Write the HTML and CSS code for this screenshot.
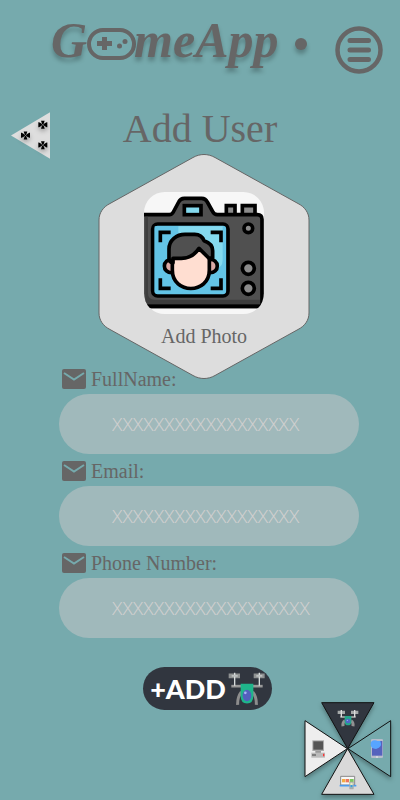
FILE: index.html
```html
<!DOCTYPE html>
<html lang="en">
<head>
<meta charset="utf-8">
<meta name="viewport" content="width=device-width, initial-scale=1">
<title>GameApp - Add User</title>
<link rel="stylesheet" href="styles.css">
</head>
<body>
<svg class="defs" aria-hidden="true">
  <symbol id="mail" viewBox="0 0 24 20">
    <path fill="#666" d="M2 0H22Q24 0 24 2V18Q24 20 22 20H2Q0 20 0 18V2Q0 0 2 0Z"/>
    <path fill="none" stroke="#76aaad" stroke-width="2" d="M2 4L12 10.500L22 4"/>
  </symbol>
  <symbol id="cross" viewBox="0 0 27 24" overflow="visible">
    <path d="M8 0H19L16 9L25 4H27V19H25L16 14L19 24H8L11 14L2 19H0V4H2L11 9Z"/>
    <path stroke="#aaa" stroke-width="1.500" d="M8 7L19 17M19 7L8 17"/>
  </symbol>
</svg>

<header class="header">
  <a class="logo" href="#" aria-label="GameApp">
    <span>G</span>
    <svg class="pad" viewBox="0 0 49 32" aria-hidden="true">
      <rect x="2" y="2" width="45" height="28" rx="14" fill="none" stroke="#666" stroke-width="4"/>
      <path d="M10 15.500H25M17.500 9V22" stroke="#666" stroke-width="5"/>
      <circle cx="32.500" cy="18" r="2.500" fill="#666"/>
      <circle cx="38" cy="13.500" r="2.500" fill="#666"/>
    </svg>
    <span class="word">meApp</span>
    <i class="dot"></i>
  </a>
  <button class="menu" type="button" aria-label="Menu">
    <svg viewBox="0 0 48 48">
      <circle cx="24" cy="24" r="21.500" fill="none" stroke="#666" stroke-width="4.500"/>
      <path d="M15 14.500H33.500M15 24H33.500M15 33.500H33.500" stroke="#666" stroke-width="5" stroke-linecap="round"/>
    </svg>
  </button>
</header>

<main>
  <div class="title-row">
    <a class="back" href="#" aria-label="Back">
      <svg viewBox="0 0 117 140">
        <path d="M0 70L117 0V140Z" fill="#dedede"/>
        <g class="soft">
          <use href="#cross" x="82" y="26" width="27" height="24"/>
          <use href="#cross" x="30" y="58" width="27" height="24"/>
          <use href="#cross" x="82" y="87" width="27" height="24"/>
        </g>
      </svg>
    </a>
    <h1>Add User</h1>
  </div>

  <button class="photo" type="button">
    <svg class="hex" viewBox="98 153 212 227" aria-hidden="true">
      <path d="M99 220C99 213 103 207 110 203.500L193 157.500C200 153.500 208 153.500 215 157.500L298 203.500C305 207 309 213 309 220V313C309 320 305 326 298 329.500L215 375.500C208 379.500 200 379.500 193 375.500L110 329.500C103 326 99 320 99 313Z" fill="#ddd" stroke="#666"/>
    </svg>
    <svg class="camera" viewBox="42 36 360 366" aria-hidden="true">
      <clipPath id="round"><rect x="42" y="36" width="360" height="366" rx="62"/></clipPath>
      <g clip-path="url(#round)" stroke="#000" stroke-width="11" stroke-linejoin="round">
        <rect x="42" y="36" width="360" height="366" fill="#f7f7f7" stroke="none"/>
        <path d="M289 103V77H315V103M337 103V77H375V103" fill="#8b8b8b" stroke-linejoin="miter"/>
        <path d="M30 104H118Q126 104 130 96L146 66Q151 55 163 55H215Q227 55 232 66L247 93Q252 104 262 104H382Q396 104 396 118V379H30Z" fill="#505050"/>
        <path d="M46 110H54V340Q54 359 74 359H390V373H46Z" fill="#3d3d3d" stroke="none"/>
        <path d="M42 379H402" />
        <rect x="163" y="77" width="50" height="27" fill="#84d9ee" stroke-linejoin="miter"/>
        <rect x="68" y="132" width="226" height="216" rx="15" fill="#63c4e6"/>
        <path d="M145 139H278V240Q278 266 252 266H145Z" fill="#84daef" stroke="none"/>
        <path d="M74 139H145Q105 190 122 240T160 342H82Q74 342 74 334Z" fill="#63c4e6" stroke="none"/>
        <path d="M91 187V157H122M242 157H273V187M273 295V325H242M122 325H91V295" fill="none" stroke-linejoin="miter"/>
        <path d="M129 239C95 233 94 282 129 278Z" fill="#dca9a4"/>
        <path d="M236 239C270 233 271 282 236 278Z" fill="#dca9a4"/>
        <path d="M127 225V270C127 344 238 344 238 270V225L207 205L170 222Z" fill="#ffded1"/>
        <path d="M117 234V207C117 180 140 163 165 163H194Q215 163 222 182C240 188 248 198 248 212V234H236L207 205Q188 235 154 235H129V248Q117 247 117 234Z" fill="#505050"/>
        <circle cx="355" cy="145" r="13" fill="#8b8b8b"/>
        <circle cx="355" cy="265" r="18" fill="#8b8b8b"/>
        <circle cx="355" cy="325" r="18" fill="#8b8b8b"/>
      </g>
    </svg>
    <span class="caption">Add Photo</span>
  </button>

  <form class="form">
    <label for="fullname"><svg viewBox="0 0 24 20" aria-hidden="true"><use href="#mail"/></svg>FullName:</label>
    <input id="fullname" type="text" placeholder="XXXXXXXXXXXXXXXXXX">
    <label for="email"><svg viewBox="0 0 24 20" aria-hidden="true"><use href="#mail"/></svg>Email:</label>
    <input id="email" type="email" placeholder="XXXXXXXXXXXXXXXXXX">
    <label for="phone"><svg viewBox="0 0 24 20" aria-hidden="true"><use href="#mail"/></svg>Phone Number:</label>
    <input id="phone" type="tel" placeholder="XXXXXXXXXXXXXXXXXXX">
    <button class="add" type="submit">
      <span>+ADD</span>
      <svg viewBox="292 46 114 104" aria-hidden="true">
        <path d="M302 91H396" stroke="#999" stroke-width="8"/>
        <path d="M332 108Q320 124 321 147M366 108Q378 124 377 147" fill="none" stroke="#8d8d8d" stroke-width="9"/>
        <path d="M294 53H328V67H294ZM369 53H402V67H369Z" fill="#8f9292"/>
        <path d="M312 51V90M386 51V90" stroke="#d8dddd" stroke-width="4"/>
        <path d="M303 60H321M377 60H395" stroke="#bcc0c0" stroke-width="5"/>
        <path d="M330 84H368V120Q368 143 349 143T330 120Z" fill="#1fb58b"/>
        <ellipse cx="349" cy="119" rx="13" ry="17" fill="#5360bd"/>
        <ellipse cx="344" cy="111" rx="4" ry="4" fill="#a9b5f5"/>
      </svg>
    </button>
  </form>
</main>

<nav class="wheel" aria-label="Devices">
  <svg viewBox="0 0 315 315">
    <g class="soft">
      <a href="#" aria-label="Drones"><path class="tri" fill="#31363f" d="M80 23H237L158 161Z"/></a>
      <a href="#" aria-label="Computers"><path class="tri" fill="#eee" d="M30 77V245L157 161Z"/></a>
      <a href="#" aria-label="Laptops"><path class="tri" fill="#d9d9d9" d="M158 161L80 298H237Z"/></a>
      <a href="#" aria-label="Phones"><path class="tri" fill="#76aaad" d="M287 77V245L159 161Z"/></a>
    </g>
    <g class="art">
      <path d="M136 66H182" stroke="#aaa" stroke-width="5"/>
      <path d="M150 77Q142 82 144 94M168 77Q176 82 174 94" fill="none" stroke="#929292" stroke-width="9"/>
      <path d="M128 47H150V57H128ZM168 47H190V57H168Z" fill="#a5a9a9"/>
      <path d="M139 45V66M179 45V66" stroke="#ddd" stroke-width="4"/>
      <path d="M149 63H169V80Q169 91 159 91T149 80Z" fill="#25a58b"/>
      <circle cx="159" cy="78" r="7" fill="#5265c9"/>
      <circle cx="157" cy="76" r="2" fill="#9fb4ff"/>

      <path d="M52 136H87V168H52Z" fill="#aaa"/>
      <path d="M55 139H84V164H55Z" fill="#555"/>
      <path d="M61 168H78V174H61Z" fill="#999"/>
      <path d="M49 173H90V188H49Z" fill="#bbb"/>
      <path d="M51 180H63" stroke="#444" stroke-width="3"/>
      <path d="M86 176V184" stroke="#f33" stroke-width="4"/>

      <rect x="228" y="132" width="36" height="57" rx="4" fill="#b7bccb"/>
      <path d="M231 138H262V182H231Z" fill="#5562bd"/>
      <path d="M231 138H256Q264 157 243 162L231 159Z" fill="#58a5ff"/>
      <circle cx="239" cy="148" r="12" fill="#58a5ff"/>
      <circle cx="246" cy="186" r="2" fill="#fff"/>

      <path d="M137 244H179V270H137Z" fill="#f7f7f7" stroke="#888" stroke-width="3"/>
      <path d="M134 272H184" stroke="#4b9cf0" stroke-width="5"/>
      <path d="M141 252H151V262H141Z" fill="#f5ad43"/>
      <path d="M152 252H162V262H152Z" fill="#ee755e"/>
      <path d="M164 252H176V262H164Z" fill="#7bc65c"/>
      <rect x="163" y="260" width="13" height="23" rx="2" fill="#aaa"/>
      <path d="M166 263H173V277H166Z" fill="#e7edc2"/>
      <path d="M166 270H173V277H166Z" fill="#3e9bd8"/>
    </g>
  </svg>
</nav>
</body>
</html>
```
FILE: styles.css
```css
* { box-sizing: border-box; }

body {
  margin: 0;
  min-height: 100vh;
  background: #76aaad;
  color: #666;
  font-family: "Liberation Serif", serif;
  font-size: 20px;
}

button {
  border: 0;
  padding: 0;
  background: none;
  color: inherit;
  font: inherit;
  cursor: pointer;
}

svg { display: block; }

.defs {
  position: absolute;
  width: 0;
  height: 0;
}

.header {
  display: flex;
  justify-content: space-between;
  align-items: flex-start;
  padding: 12px 17px 24px 51px;
}

.logo {
  display: flex;
  align-items: center;
  color: #666;
  font-size: 50px;
  font-style: italic;
  font-weight: bold;
  line-height: 56px;
  text-decoration: none;
  text-shadow: 0 4px 4px rgba(0, 0, 0, .25);
}

.pad {
  width: 49px;
  height: 32px;
  margin-top: 8px;
}

.word { margin-left: -2px; }

.dot {
  width: 12px;
  height: 12px;
  margin: 8px 0 0 16px;
  border-radius: 50%;
  background: #666;
  box-shadow: 0 4px 4px rgba(0, 0, 0, .25);
}

.menu {
  flex: none;
  margin-top: 14px;
}

.menu svg {
  width: 48px;
  height: 48px;
}

.title-row {
  display: grid;
  grid-template-columns: 50px 1fr 50px;
  align-items: center;
}

.back {
  justify-self: end;
  padding-top: 14px;
}

.back svg {
  width: 39px;
  height: 47px;
}

.soft { filter: drop-shadow(0 8px 6px rgba(0, 0, 0, .3)); }

h1 {
  margin: 0;
  font-size: 40px;
  font-weight: normal;
  line-height: 48px;
  text-align: center;
}

.photo {
  position: relative;
  display: flex;
  flex-direction: column;
  align-items: center;
  gap: 10px;
  width: 212px;
  margin: -6px auto -18px;
  left: 4px;
  padding: 39px 0 32px;
}

.hex {
  position: absolute;
  inset: 0;
  width: 100%;
  height: 100%;
}

.camera {
  position: relative;
  width: 120px;
  height: 122px;
}

.caption {
  position: relative;
  line-height: 24px;
}

.form {
  display: flex;
  flex-direction: column;
  padding: 0 41px 32px 59px;
}

label {
  display: flex;
  align-items: center;
  gap: 5px;
  height: 32px;
  padding: 2px 0 0 3px;
}

label svg {
  width: 24px;
  height: 20px;
}

input {
  width: 100%;
  height: 60px;
  padding: 0 32px 0 53px;
  border: 0;
  border-radius: 30px;
  background: #a0b9bb;
  color: #555;
  font: 300 19px "Noto Sans", sans-serif;
}

input::placeholder {
  color: #cfcfcf;
  opacity: 1;
}

.add {
  display: flex;
  align-items: center;
  align-self: center;
  gap: 2px;
  height: 43px;
  margin-top: 29px;
  margin-right: 3px;
  padding: 0 6px 0 7px;
  border-radius: 22px;
  background: #31363f;
  color: #fff;
  font: 900 27px Lato, sans-serif;
}

.add svg {
  width: 38px;
  height: 35px;
}

.wheel {
  position: fixed;
  right: 0;
  bottom: 0;
}

.wheel svg {
  width: 105px;
  height: 105px;
}

.tri {
  stroke: #111;
  stroke-width: 3;
}

.art { pointer-events: none; }
```
